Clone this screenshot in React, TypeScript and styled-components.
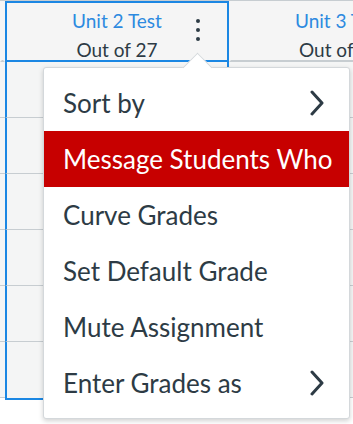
import React from 'react';
import styled, { createGlobalStyle } from 'styled-components';

const GlobalStyle = createGlobalStyle`
  body {
    margin: 0;
    background: #ffffff;
    font-family: Lato, 'Open Sans', sans-serif;
  }
`;

const BLUE = '#1b87e3';
const LINE = '#c7cdd1';
const INK = '#2d3b45';

interface MenuEntry {
  label: string;
  submenu?: boolean;
  active?: boolean;
}

const entries: MenuEntry[] = [
  { label: 'Sort by', submenu: true },
  { label: 'Message Students Who', active: true },
  { label: 'Curve Grades' },
  { label: 'Set Default Grade' },
  { label: 'Mute Assignment' },
  { label: 'Enter Grades as', submenu: true },
];

const ROWS = 6;

const Chevron = () => (
  <svg width='16' height='26' viewBox='0 0 16 26' fill='none'>
    <path d='M3 2 L13 13 L3 24' stroke={INK} strokeWidth='3' strokeLinecap='round' strokeLinejoin='round' />
  </svg>
);

const App = () => (
  <>
    <GlobalStyle />
    <Stage>
      <Grid>
        <Column $width={5}>
          <HeaderCell />
          {Array.from({ length: ROWS }).map((_, i) => (
            <Cell key={i} />
          ))}
        </Column>
        <Column $width={224}>
          <HeaderCell $selected>
            <Title>Unit 2 Test</Title>
            <Points>Out of 27</Points>
            <Kebab>
              <Dot />
              <Dot />
              <Dot />
            </Kebab>
          </HeaderCell>
          {Array.from({ length: ROWS }).map((_, i) => (
            <Cell key={i} $selected $last={i === ROWS - 1} />
          ))}
        </Column>
        <Column $width={200}>
          <HeaderCell $align='left'>
            <Title>Unit 3 Test</Title>
            <Points $indent>Out of 30</Points>
          </HeaderCell>
          {Array.from({ length: ROWS }).map((_, i) => (
            <Cell key={i} />
          ))}
        </Column>
      </Grid>

      <Menu>
        <Caret />
        {entries.map(entry => (
          <Item key={entry.label} $active={entry.active}>
            <span>{entry.label}</span>
            {entry.submenu && <Chevron />}
          </Item>
        ))}
      </Menu>
    </Stage>
  </>
);

const Stage = styled.div`
  position: relative;
  width: 353px;
  height: 424px;
  overflow: hidden;
  background: #ffffff;
`;

const Grid = styled.div`
  display: flex;
  border-top: 1px solid ${LINE};
`;

const Column = styled.div<{ $width: number }>`
  display: flex;
  flex-direction: column;
  flex: 0 0 ${props => props.$width}px;
  width: ${props => props.$width}px;
`;

const HeaderCell = styled.div<{ $selected?: boolean; $align?: string }>`
  position: relative;
  box-sizing: border-box;
  height: 61px;
  display: flex;
  flex-direction: column;
  align-items: ${props => (props.$align === 'left' ? 'flex-start' : 'center')};
  padding-top: 3px;
  padding-left: ${props => (props.$align === 'left' ? '64px' : '0')};
  background: #f5f5f5;
  border: 2px solid ${props => (props.$selected ? BLUE : 'transparent')};
  border-bottom: 2px solid ${props => (props.$selected ? BLUE : LINE)};
  white-space: nowrap;
`;

const Title = styled.div`
  font-size: 19px;
  line-height: 30px;
  color: #2d8ae0;
`;

const Points = styled.div<{ $indent?: boolean }>`
  font-size: 19px;
  line-height: 28px;
  color: ${INK};
  margin-left: ${props => (props.$indent ? '4px' : '0')};
`;

const Kebab = styled.div`
  position: absolute;
  left: 189px;
  top: 16px;
  display: flex;
  flex-direction: column;
  gap: 5px;
`;

const Dot = styled.span`
  width: 4px;
  height: 4px;
  border-radius: 50%;
  background: ${INK};
`;

const Cell = styled.div<{ $selected?: boolean; $last?: boolean }>`
  box-sizing: border-box;
  height: ${props => (props.$last ? 58 : 56)}px;
  background: #f4f5f5;
  border-bottom: ${props => (props.$last && props.$selected ? `2px solid ${BLUE}` : `1px solid ${LINE}`)};
  border-left: ${props => (props.$selected ? `2px solid ${BLUE}` : 'none')};
  border-right: ${props => (props.$selected ? `2px solid ${BLUE}` : 'none')};
`;

const Menu = styled.div`
  position: absolute;
  left: 43px;
  top: 67px;
  width: 307px;
  box-sizing: border-box;
  padding: 7px 0;
  background: #ffffff;
  border: 1px solid #d4d8db;
  border-radius: 3px;
  box-shadow: 0 2px 5px rgba(0, 0, 0, 0.18);
`;

const Caret = styled.div`
  position: absolute;
  left: 143px;
  top: -11px;
  width: 20px;
  height: 20px;
  background: #ffffff;
  border-left: 1px solid #d4d8db;
  border-top: 1px solid #d4d8db;
  transform: rotate(45deg);
`;

const Item = styled.div<{ $active?: boolean }>`
  position: relative;
  height: 56px;
  display: flex;
  align-items: center;
  justify-content: space-between;
  padding: 0 24px 0 19px;
  font-size: 26px;
  color: ${props => (props.$active ? '#ffffff' : INK)};
  background: ${props => (props.$active ? '#c70000' : 'transparent')};
  white-space: nowrap;
`;

export default App;
